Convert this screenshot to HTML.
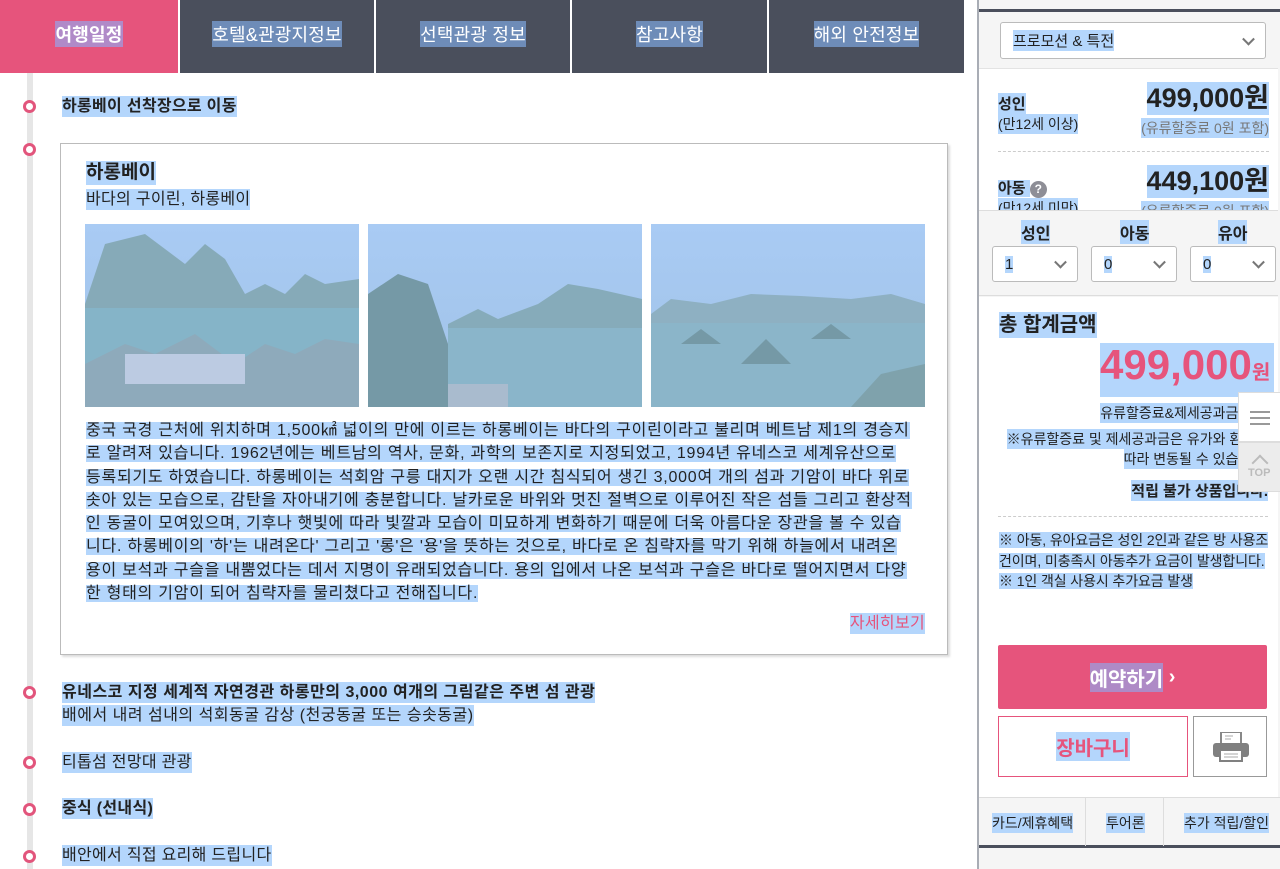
<!DOCTYPE html>
<html><head><meta charset="utf-8"><style>
*{margin:0;padding:0;box-sizing:border-box}
body{width:1280px;height:869px;overflow:hidden;background:#fff;font-family:"Liberation Sans","Noto Sans CJK KR",sans-serif;color:#222;position:relative}
.h{background:#b4d6fc}
.a{position:absolute;white-space:nowrap}
.tab{position:absolute;top:0;height:73px;background:#4a4f5c;color:#fff;font-size:18px;display:flex;align-items:center;justify-content:center;padding-bottom:6px;letter-spacing:0.2px}
.tab span{background:#6e8cb8}
.dot{position:absolute;left:23px;width:13px;height:13px;border:3px solid #e2557c;border-radius:50%;background:#fff}
.sel{position:absolute;background:#fff;border:1px solid #bbb;border-radius:3px;font-size:15px;padding-left:12px;display:flex;align-items:center}
.chev{position:absolute;right:12px;top:50%;width:9px;height:9px;border-right:2px solid #777;border-bottom:2px solid #777;transform:translateY(-70%) rotate(45deg)}
.it{font-size:16px;line-height:21px;letter-spacing:0.3px}
</style></head><body>
<div class="tab" style="left:0;width:178px;background:#e6547c;font-weight:bold"><span style="background:#b08ac8">여행일정</span></div>
<div class="tab" style="left:180px;width:194px"><span>호텔&amp;관광지정보</span></div>
<div class="tab" style="left:376px;width:194px"><span>선택관광 정보</span></div>
<div class="tab" style="left:572px;width:195px"><span>참고사항</span></div>
<div class="tab" style="left:769px;width:195px"><span>해외 안전정보</span></div>

<div style="position:absolute;left:27px;top:73px;width:6px;height:796px;background:#e6e6e6"></div>
<div class="dot" style="top:100px"></div>
<div class="dot" style="top:143px"></div>
<div class="dot" style="top:686px"></div>
<div class="dot" style="top:756px"></div>
<div class="dot" style="top:803px"></div>
<div class="dot" style="top:850px"></div>

<div class="a h it" style="left:62px;top:96px;font-weight:bold">하롱베이 선착장으로 이동</div>

<div style="position:absolute;left:60px;top:143px;width:888px;height:512px;border:1px solid #bbb;box-shadow:2px 2px 2px #ddd"></div>
<div class="a h" style="left:86px;top:161px;font-size:19px;font-weight:bold;line-height:24px">하롱베이</div>
<div class="a h it" style="left:86px;top:189px">바다의 구이린, 하롱베이</div>

<svg style="position:absolute;left:85px;top:224px" width="840" height="183">
<defs><linearGradient id="s" x1="0" y1="0" x2="0" y2="1"><stop offset="0" stop-color="#a9cbf4"/><stop offset="1" stop-color="#a0c2e6"/></linearGradient></defs>
<g><rect width="274" height="183" fill="url(#s)"/><path d="M0 80 L20 20 L60 10 L100 40 L120 20 L140 35 L160 70 L180 60 L200 70 L220 50 L240 60 L274 55 L274 85 L0 85Z" fill="#86aab8"/><rect y="84" width="274" height="99" fill="#85b4c8"/><path d="M0 183 L0 140 L40 120 L70 130 L110 110 L150 140 L180 120 L210 130 L240 115 L274 120 L274 183Z" fill="#8eaabb"/><path d="M40 130 h120 v30 h-120z" fill="#bccbe2"/></g>
<g transform="translate(283,0)"><rect width="274" height="183" fill="url(#s)"/><path d="M0 183 L0 70 L30 50 L60 60 L80 120 L90 183Z" fill="#7599a6"/><path d="M80 100 L110 85 L130 95 L170 80 L200 60 L230 65 L274 75 L274 105 L80 105Z" fill="#86abba"/><rect x="80" y="104" width="194" height="79" fill="#8ab5ca"/><path d="M80 160 h60 v23 h-60z" fill="#a9bbce"/></g>
<g transform="translate(566,0)"><rect width="274" height="183" fill="url(#s)"/><path d="M0 90 L20 75 L60 80 L100 70 L150 72 L200 75 L240 70 L274 80 L274 100 L0 100Z" fill="#8eb0c2"/><rect y="99" width="274" height="84" fill="#8bb5c9"/><path d="M30 120 l20 -15 l20 15z M90 140 l25 -25 l25 25z M160 115 l20 -15 l20 15z" fill="#7599a6"/><path d="M200 183 L230 150 L274 140 L274 183Z" fill="#7fa2ac"/></g>
</svg>

<div style="position:absolute;left:86px;top:419px;font-size:16px;line-height:23.3px;white-space:nowrap;letter-spacing:0.75px"><span class="h">중국 국경 근처에 위치하며 1,500㎢ 넓이의 만에 이르는 하롱베이는 바다의 구이린이라고 불리며 베트남 제1의 경승지</span><br><span class="h">로 알려져 있습니다. 1962년에는 베트남의 역사, 문화, 과학의 보존지로 지정되었고, 1994년 유네스코 세계유산으로 </span><br><span class="h">등록되기도 하였습니다. 하롱베이는 석회암 구릉 대지가 오랜 시간 침식되어 생긴 3,000여 개의 섬과 기암이 바다 위로</span><br><span class="h">솟아 있는 모습으로, 감탄을 자아내기에 충분합니다. 날카로운 바위와 멋진 절벽으로 이루어진 작은 섬들 그리고 환상적</span><br><span class="h">인 동굴이 모여있으며, 기후나 햇빛에 따라 빛깔과 모습이 미묘하게 변화하기 때문에 더욱 아름다운 장관을 볼 수 있습</span><br><span class="h">니다. 하롱베이의 '하'는 내려온다' 그리고 '롱'은 '용'을 뜻하는 것으로, 바다로 온 침략자를 막기 위해 하늘에서 내려온</span><br><span class="h">용이 보석과 구슬을 내뿜었다는 데서 지명이 유래되었습니다. 용의 입에서 나온 보석과 구슬은 바다로 떨어지면서 다양</span><br><span class="h">한 형태의 기암이 되어 침략자를 물리쳤다고 전해집니다. </span></div>
<div class="a h it" style="right:355px;top:613px;color:#e6547c">자세히보기</div>

<div class="a h it" style="left:62px;top:682px;font-weight:bold;letter-spacing:0.5px">유네스코 지정 세계적 자연경관 하롱만의 3,000 여개의 그림같은 주변 섬 관광</div>
<div class="a h it" style="left:62px;top:705px;letter-spacing:0.5px">배에서 내려 섬내의 석회동굴 감상 (천궁동굴 또는 승솟동굴)</div>
<div class="a h it" style="left:62px;top:752px">티톱섬 전망대 관광 </div>
<div class="a h it" style="left:62px;top:798px;font-weight:bold">중식 (선내식)</div>
<div class="a h it" style="left:62px;top:845px">배안에서 직접 요리해 드립니다</div>

<!-- right panel -->
<div style="position:absolute;left:977px;top:0;width:303px;height:869px;background:#f5f5f5;border-left:2px solid #a9adb5"></div>
<div style="position:absolute;left:979px;top:9px;width:301px;height:3px;background:#4a4f5c"></div>
<div class="sel" style="left:1000px;top:22px;width:266px;height:37px"><span class="h">프로모션 &amp; 특전</span><i class="chev"></i></div>
<div style="position:absolute;left:979px;top:68px;width:299px;height:142px;background:#fff;overflow:hidden;border-top:1px solid #e3e3e3">
 <div class="a h" style="left:19px;top:24px;font-size:15px;font-weight:bold">성인</div>
 <div class="a h" style="left:19px;top:45px;font-size:14px">(만12세 이상)</div>
 <div class="a h" style="right:9px;top:13px;font-size:27px;font-weight:bold;line-height:33px">499,000원</div>
 <div class="a h" style="right:9px;top:49px;font-size:14px;color:#777">(유류할증료 0원 포함)</div>
 <div style="position:absolute;left:19px;right:9px;top:82px;border-top:1px dashed #ccc"></div>
 <div class="a" style="left:19px;top:108px;font-size:15px;font-weight:bold"><span class="h">아동 </span> <span style="display:inline-block;width:17px;height:17px;border-radius:50%;background:#8e8e96;color:#fff;font-size:12px;text-align:center;line-height:17px;vertical-align:middle">?</span></div>
 <div class="a h" style="left:19px;top:129px;font-size:14px">(만12세 미만)</div>
 <div class="a h" style="right:9px;top:96px;font-size:27px;font-weight:bold;line-height:33px">449,100원</div>
 <div class="a h" style="right:9px;top:132px;font-size:14px;color:#777">(유류할증료 0원 포함)</div>
</div>
<div style="position:absolute;left:979px;top:210px;width:299px;height:86px;background:#f5f5f5;border-top:1px solid #ddd;border-bottom:1px solid #ddd"></div>
<div class="a h" style="left:1021px;top:220px;font-size:16px;font-weight:bold">성인</div>
<div class="a h" style="left:1120px;top:220px;font-size:16px;font-weight:bold">아동</div>
<div class="a h" style="left:1218px;top:220px;font-size:16px;font-weight:bold">유아</div>
<div class="sel" style="left:992px;top:246px;width:86px;height:36px"><span class="h">1</span><i class="chev"></i></div>
<div class="sel" style="left:1091px;top:246px;width:86px;height:36px"><span class="h">0</span><i class="chev"></i></div>
<div class="sel" style="left:1190px;top:246px;width:86px;height:36px"><span class="h">0</span><i class="chev"></i></div>
<div style="position:absolute;left:979px;top:297px;width:299px;height:500px;background:#fff"></div>
<div class="a h" style="left:999px;top:312px;font-size:20px;font-weight:bold;line-height:26px">총 합계금액</div>
<div class="a h" style="left:1100px;top:343px;width:174px;text-align:right;color:#e6547c;font-weight:bold;padding-right:8px;line-height:44px"><span style="font-size:42px">499,000</span><span style="font-size:20px">원</span></div>
<div class="a h" style="right:12px;top:403px;font-size:14px">유류할증료&amp;제세공과금 포함</div>
<div class="a h" style="right:12px;top:429px;font-size:14px">※유류할증료 및 제세공과금은 유가와 환율에</div>
<div class="a h" style="right:12px;top:449px;font-size:14px">따라 변동될 수 있습니다.</div>
<div class="a h" style="right:12px;top:480px;font-size:15px;font-weight:bold">적립 불가 상품입니다.</div>
<div style="position:absolute;left:998px;right:12px;top:516px;border-top:1px dashed #ccc"></div>
<div style="position:absolute;left:999px;top:530px;font-size:14px;line-height:20.5px;white-space:nowrap;letter-spacing:-0.1px"><span class="h">※ 아동, 유아요금은 성인 2인과 같은 방 사용조</span><br><span class="h">건이며, 미충족시 아동추가 요금이 발생합니다.</span><br><span class="h">※ 1인 객실 사용시 추가요금 발생</span></div>
<div style="position:absolute;left:1238px;top:392px;width:42px;height:50px;background:#fff;border:1px solid #ddd;border-right:none"><div style="position:absolute;left:11px;top:18px;width:20px;height:2px;background:#999;box-shadow:0 6px 0 #999,0 12px 0 #999"></div></div>
<div style="position:absolute;left:1238px;top:442px;width:42px;height:50px;background:#ececec;border:1px solid #ddd;border-right:none"><div style="position:absolute;left:15px;top:14px;width:12px;height:12px;border-left:2px solid #bbb;border-top:2px solid #bbb;transform:rotate(45deg)"></div><div class="a" style="left:9px;top:24px;font-size:11px;color:#bbb;font-weight:bold">TOP</div></div>

<div style="position:absolute;left:998px;top:645px;width:269px;height:64px;background:#e6547c;border-radius:2px;display:flex;align-items:center;justify-content:center;color:#fff;font-size:20px;font-weight:bold"><span style="background:#ae8ac6">예약하기</span>&nbsp;›</div>
<div style="position:absolute;left:998px;top:716px;width:190px;height:61px;border:1px solid #e6547c;background:#fff;display:flex;align-items:center;justify-content:center;color:#e6547c;font-size:20px;font-weight:bold"><span class="h">장바구니</span></div>
<div style="position:absolute;left:1193px;top:716px;width:74px;height:61px;border:1px solid #999;background:#fff">
<svg style="position:absolute;left:19px;top:15px" width="36" height="30"><rect x="8" y="0" width="20" height="12" fill="#fff" stroke="#888" stroke-width="2"/><path d="M12 4h8M12 7h6" stroke="#aaa"/><rect x="0" y="11" width="36" height="14" rx="3" fill="#808080"/><rect x="7" y="18" width="22" height="11" fill="#fff" stroke="#808080" stroke-width="2"/><path d="M11 22h14M11 25h14" stroke="#aaa"/></svg></div>
<div style="position:absolute;left:979px;top:797px;width:301px;height:51px;background:#f5f5f5;border-top:1px solid #ddd;border-bottom:3px solid #4a4f5c"></div>
<div style="position:absolute;left:1085px;top:798px;width:1px;height:48px;background:#ddd"></div>
<div style="position:absolute;left:1163px;top:798px;width:1px;height:48px;background:#ddd"></div>
<div class="a h" style="left:992px;top:813px;font-size:14px">카드/제휴혜택</div>
<div class="a h" style="left:1106px;top:813px;font-size:14px">투어론</div>
<div class="a h" style="left:1184px;top:813px;font-size:14px">추가 적립/할인</div>
</body></html>
